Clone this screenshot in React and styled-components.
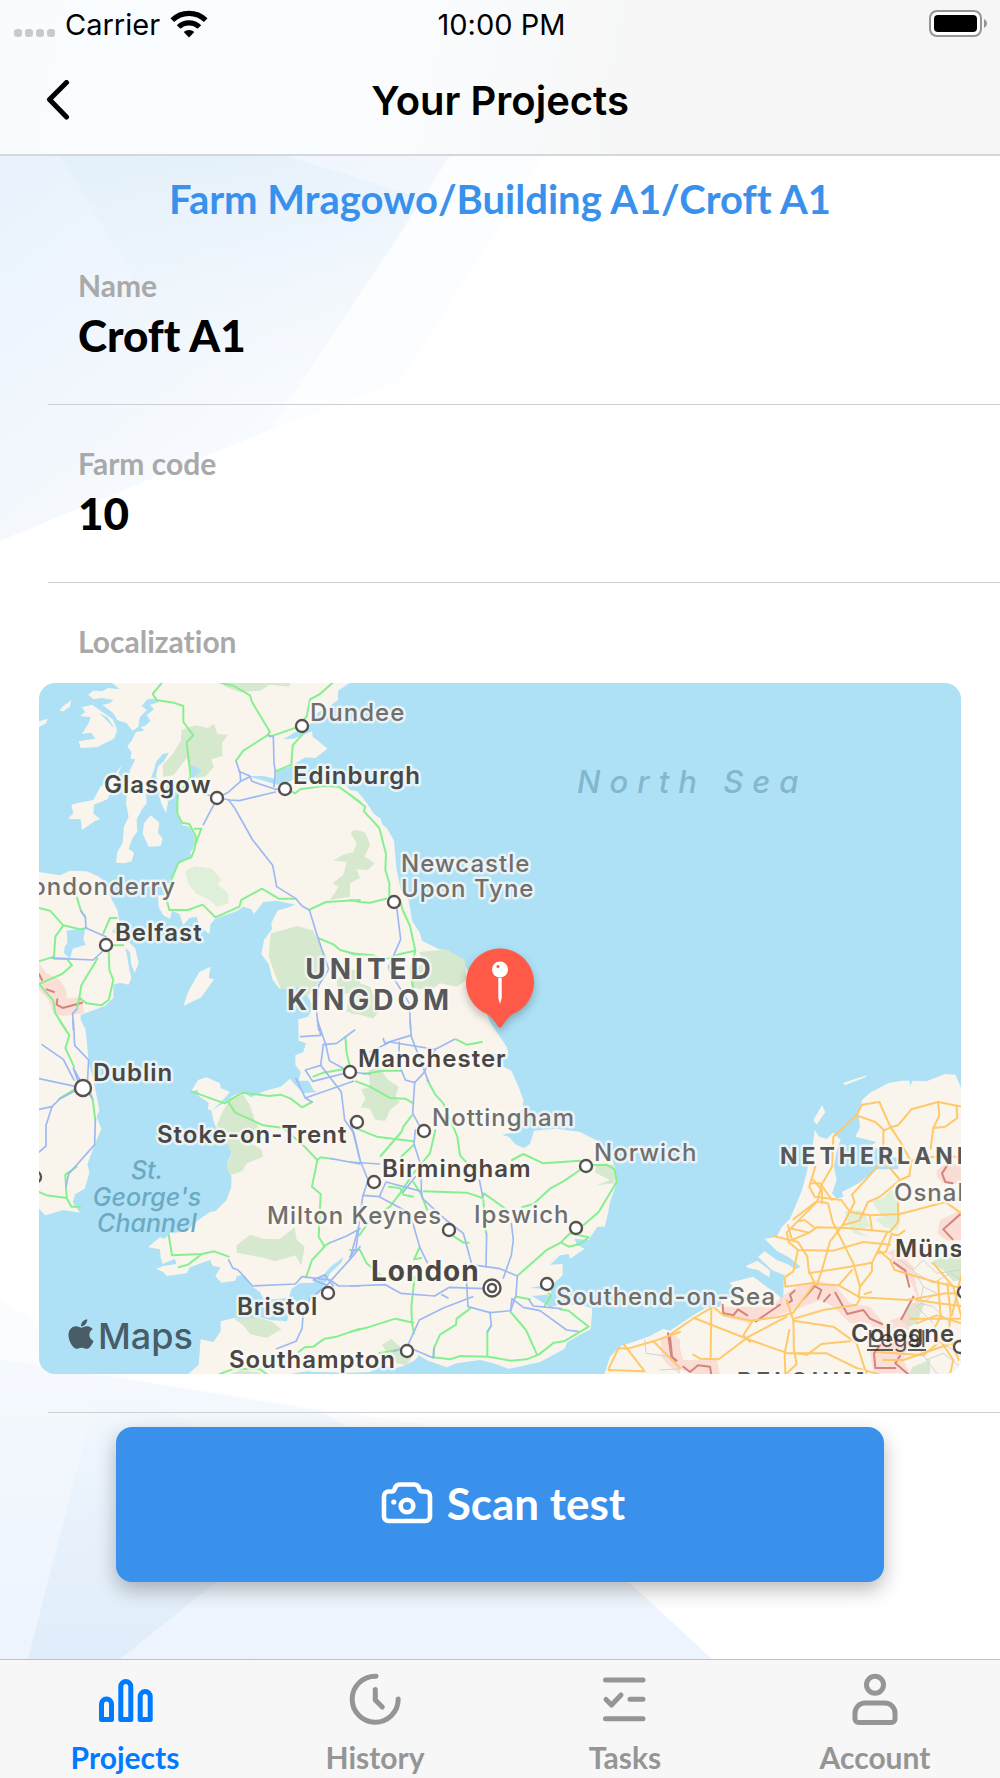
import React from 'react';
import styled, { createGlobalStyle } from 'styled-components';
import { FaApple } from 'react-icons/fa';

const colors = {
  blue: '#3a91ec',
  active: '#007aff',
  inactive: '#959595',
  label: '#a9a9a9',
  line: '#cdcfd2',
  water: '#aee1f6',
  land: '#f9f5ed',
  park: '#d6e8cd',
  wood: '#e0efd9',
  green: '#86f090',
  road: '#9db9f3',
  motorway: '#ffc96b',
  border: '#d3857d',
  pin: '#ff5a47',
};

const fonts = {
  system: "Inter, 'Liberation Sans', sans-serif",
  brand: "Lato, 'Open Sans', sans-serif",
};

const tabs = [
  { name: 'Projects', active: true },
  { name: 'History' },
  { name: 'Tasks' },
  { name: 'Account' },
];

/* ---- map data ---- */

// The terrain is surveyed in five sheets, each with its own origin.
const sheets = {
  nw: [-27, -39],
  ne: [933, -39],
  sw: [-27, 1011],
  se: [933, 1011],
  nl: [1893, 1071],
};

const plot = (...parts) =>
  parts
    .map(([sheet, points]) => {
      const [dx, dy] = sheets[sheet];
      return points
        .split(' ')
        .map((point) => {
          const [x, y] = point.split(',').map(Number);
          return `${x + dx},${y + dy}`;
        })
        .join(' ');
    })
    .join(' ');

const land = [
  // Great Britain
  plot(
    [
      'nw',
      '245,38 270,58 235,54 215,64 190,62 175,74 190,88 215,84 250,90 240,100 217,104 250,130 262,150 290,160 308,182 325,170 330,142 350,120 335,108 352,88 378,86 388,96 360,104 372,118 350,136 362,152 345,168 332,170 342,182 318,186 304,214 292,228 304,246 302,266 316,268 300,300 296,330 288,400 296,440 282,470 278,520 262,545 258,578 285,580 305,574 312,548 296,536 306,508 322,484 320,448 336,418 350,400 348,370 360,330 372,300 378,276 398,252 416,248 402,274 384,290 378,316 388,360 392,396 408,430 414,396 402,370 414,336 440,340 448,372 440,430 458,466 478,470 494,500 490,536 480,548 486,562 446,582 430,610 424,634 404,652 404,676 384,676 386,712 400,736 420,746 426,722 448,732 460,766 478,744 500,740 506,762 522,780 538,792 542,762 556,746 584,736 620,724 640,710 664,718 672,732 700,696 740,692 796,704 770,714 742,722 724,760 726,778 702,810 694,852 716,882 728,930 750,958 772,938 800,950 826,948 834,980 850,1010 834,1040 805,1048',
    ],
    [
      'sw',
      '805,14 806,62 828,70 820,96 796,106 796,134 812,156 806,182 836,182 850,210 862,216 820,220 796,196 780,176 752,200 706,212 690,220 662,232 640,216 606,228 600,236 566,258 544,272 550,300 556,318 590,356 606,396 592,430 604,470 604,500 590,540 556,574 540,576 500,604 470,634 420,640 404,656 390,652 354,682 390,688 392,712 398,732 434,716 440,732 400,738 378,746 400,756 410,768 470,760 480,742 540,720 548,738 572,742 556,768 574,788 616,782 620,768 642,764 664,798 690,816 700,838 730,838 776,834 784,808 808,790 850,788 880,766 900,742 940,712 934,728 900,760 886,790 868,820 826,846 806,880 780,880 770,904 720,900 690,892 640,900 612,894 572,904 572,934 550,966 512,958 506,1034 470,1066 770,1066 800,1058 860,1056',
    ],
    [
      'se',
      '0,1058 60,1056 100,1034 130,1046 160,1038 200,1018 240,1024 290,1042 320,1030 390,1020 430,1030 476,1046 500,1042 570,1026 600,1010 644,986 652,966 690,944 722,928 726,880 726,864 690,856 640,852 600,862 560,836 545,828 590,824 608,830 600,808 540,804 580,796 612,790 638,766 638,732 600,734 630,706 656,702 660,716 704,686 680,674 674,656 716,660 742,620 764,620 774,580 780,546 800,490 796,444 780,404 742,362 690,336 620,326 552,332 540,372 522,384 498,374 476,350 456,344 484,338 500,322 496,284 518,268 520,240 508,206 484,152 444,132 418,112 388,112 420,100 476,104 470,80 440,36 415,0',
    ],
    [
      'ne',
      '428,1080 412,1034 398,996 370,940 346,888 326,866 284,840 264,836 216,812 210,790 186,752 176,690 152,656 140,600 136,560 132,512 112,476 96,462 92,446 72,432 48,396 22,364 0,360',
    ],
    [
      'nw',
      '950,348 920,344 870,330 830,330 792,328 768,340 740,344 694,330 648,318 700,318 736,326 740,304 780,290 826,262 856,264 892,236 866,214 848,200 846,184 790,206 760,208 800,184 846,158 856,132 900,108 924,90 924,62 960,38',
    ]
  ),
  // Ireland
  plot(
    [
      'nw',
      '27,606 90,616 120,602 170,604 210,622 232,654 246,690 262,720 268,752 246,786 282,800 316,836 326,880 314,908 304,884 300,846 286,834 292,862 298,900 304,924 296,944 270,938 250,944 250,984 224,1008 182,1024 152,1034 152,1080',
    ],
    [
      'sw',
      '152,0 166,26 170,60 176,130 190,178 208,270 200,290 214,326 196,370 172,432 178,458 164,506 136,522 128,546 150,578 100,570 46,586 27,566',
    ]
  ),
  // Hebrides, Islay, Arran, Isle of Man
  plot(['nw', '155,112 186,104 226,132 248,148 262,180 252,206 200,232 152,234 146,214 196,206 184,188 156,192 176,160 182,142 150,138 166,126']),
  plot(['nw', '276,286 254,314 210,352 190,390 140,400 124,404 130,430 114,446 152,448 156,480 196,452 210,448 190,430 192,404 232,388 246,360 272,340 262,316']),
  plot(['nw', '362,436 388,458 384,488 398,506 392,528 356,530 338,492 342,460']),
  plot(['nw', '542,890 536,924 552,928 514,982 460,1008 476,962 508,906']),
  plot(['nw', '124,90 120,110 100,124 88,122 100,108']),
  plot(['nw', '54,146 48,160 27,172 27,154']),
  // Anglesey
  plot(['sw', '504,180 530,172 570,190 572,204 600,216 582,236 546,272 534,268 536,248 506,228 504,210 484,214']),
  // Continent
  plot(
    ['se', '762,1066 780,1010 812,978 850,966 900,948 940,926'],
    [
      'nl',
      '0,872 70,826 110,802 150,800 156,780 180,772 330,800 340,770 342,706 372,690 392,680 360,654 320,632 284,596 320,590 336,560 360,536 380,490 396,450 410,400 416,360 428,318 434,270 448,290 470,296 490,278 512,300 500,330 492,380 500,420 486,460 500,476 520,470 516,456 566,430 620,388 684,388 690,356 664,350 650,330 596,320 620,306 556,290 570,262 566,226 576,180 600,158 654,130 694,122 718,122 720,138 728,122 770,124 824,102 856,104 876,150 876,1010 0,1010',
    ]
  ),
  plot(['nl', '228,678 262,662 300,692 298,712 264,690 234,684']),
  plot(['nl', '264,650 284,634 320,660 352,672 384,692 340,704 306,690']),
  plot(['nl', '178,728 250,710 290,740 330,770 334,796 280,780 220,770']),
  plot(['nl', '456,196 466,216 440,254 430,240']),
  plot(['nl', '520,128 590,106 586,112 524,136']),
];

const lakes = [
  plot(['nw', '110,782 166,774 160,810 168,824 128,836 120,866 102,850 104,830 112,820']),
  plot(['nw', '482,284 514,300 486,330']),
  plot(['nw', '208,128 232,142 262,186 292,198 288,204 246,168']),
  plot(['sw', '768,1066 830,1054 870,1058 900,1066']),
  plot(['se', '206,1006 250,1032 262,1050 230,1050 190,1028']),
];

const parks = [
  plot(['nw', '455,180 496,166 534,174 552,162 562,192 594,194 576,220 578,258 544,268 552,290 528,318 500,326 480,292 470,264 430,316 400,320 398,286 430,250 452,214']),
  plot(['nw', '570,38 590,52 630,66 690,62 720,44 776,50 784,38']),
  plot(
    ['nw', '962,490 970,480 990,482'],
    ['ne', '46,488 60,524 44,560 74,580 54,600 20,598 30,624 0,640'],
    ['nw', '960,680 900,690 926,650 908,640 940,614 950,576 910,572 936,556 970,546 980,520']
  ),
  plot(['nw', '722,790 760,780 802,768 850,782 868,820 890,860 880,920 850,960 830,980 800,950 752,958 734,910 716,860']),
  plot(['nw', '920,930 950,900 990,900 990,1026 950,1026 956,970 924,972']),
  plot(['ne', '0,930 60,950 90,1020 70,1046 30,1034 0,1030']),
  plot(['ne', '208,846 290,838 344,870 350,930 320,950 270,940 240,962 184,952 180,906 220,880']),
  plot(['sw', '600,240 640,224 660,256 674,300 690,330 664,370 696,390 698,412 650,430 638,452 600,466 590,440 606,400 590,370 560,316 580,270']),
  plot(['se', '56,150 90,144 112,178 146,200 136,232 150,246 120,270 106,302 76,300 60,266 32,262 46,236 34,208 60,200']),
  plot(['sw', '620,676 660,644 700,656 748,658 794,622 800,660 824,680 814,738 796,706 736,724 704,714 620,698']),
  plot(['sw', '614,898 680,892 724,904 754,928 710,954 660,942 640,916']),
  plot(['se', '96,974 124,956 150,980 186,1010 170,1036 140,1030 112,1000']),
  plot(['sw', '590,1066 630,1050 690,1058 700,1066']),
  plot(['se', '738,436 794,434 794,490 740,496 780,480 736,458']),
  plot(['nl', '728,980 780,960 780,1004 716,1004']),
  plot(['nl', '780,670 830,640 874,650 874,720 850,724 820,690']),
  plot(['nl', '690,840 726,790 764,790 740,850 716,860']),
];

const woods = [
  plot(['nw', '466,602 494,588 546,596 574,630 562,642 594,670 596,700 560,710 540,690 500,672 474,640']),
  plot(['nl', '524,514 570,510 590,530 600,560 560,570 600,592 550,580 534,550']),
  plot(['nl', '604,480 640,474 664,446 686,470 692,540 680,572 640,560 616,536 636,530']),
];

const borderZones = [
  plot(['nw', '27,880 50,910 90,930 108,960 110,986 156,980 162,1030 100,1038 70,1030 56,990 27,960']),
  plot(['nl', '152,800 240,800 300,800 350,760 380,740 440,720 500,740 540,790 600,800 640,850 720,820 740,770 720,720 660,660 680,630 730,680 740,740 750,780 716,840 720,900 700,960 720,1000 610,1000 600,930 640,900 600,850 540,850 490,800 450,780 400,800 310,830 240,850 160,830']),
  plot(['nl', '0,880 20,890 40,960 90,960 140,960 150,1004 80,1004 20,984 0,960']),
  plot(['se', '932,954 960,940 990,960 990,1062 960,1040 934,1010']),
  plot(['nl', '800,390 830,370 874,376 874,432 820,430 800,410']),
  plot(['nl', '810,540 874,510 874,600 830,602 802,580']),
  plot(['nl', '650,640 690,620 770,630 760,650 700,660']),
];

const borderLines = [
  plot(['nw', '27,912 36,930']),
  plot(['nw', '50,958 72,966']),
  plot(['nw', '82,988 80,1004 98,1014 156,998']),
  plot(['nl', '158,794 160,820 190,826 204,808 232,826']),
  plot(['nl', '258,844 330,794']),
  plot(['nl', '374,752 360,764 366,782 352,790']),
  plot(['nl', '402,776 434,738 454,750 444,776']),
  plot(['nl', '462,784 480,764']),
  plot(['nl', '496,758 532,822 580,810 600,836 636,852']),
  plot(['nl', '672,668 706,692 718,740']),
  plot(['nl', '730,770 694,838']),
  plot(['nl', '616,984 612,940 630,916']),
  plot(['nl', '620,984 676,984']),
  plot(['nl', '690,948 676,970 714,1002']),
  plot(['nl', '0,890 6,950 20,962']),
  plot(['nl', '40,980 60,996 84,976 120,980 124,1004']),
  plot(['nl', '832,376 816,400 826,426 848,430']),
  plot(['nl', '874,520 820,568 848,598']),
  plot(['se', '954,940 964,1010 978,1022']),
];

const greenRoads = [
  plot(['nw', '396,38 368,72 380,90 430,98 460,108 460,156 490,196 470,216 476,270 482,320 442,378 442,430 456,458 478,462 498,500 494,536 484,562 446,576 426,624 410,690 418,720 474,720 518,704 556,742 628,710 634,690 696,656 746,686 796,686']),
  plot(['nw', '572,38 612,48 660,76 666,96 720,186 712,196 640,242 618,272']),
  plot(['nw', '908,38 870,72 840,88 830,140 800,172 720,200']),
  plot(['nw', '820,190 788,226 784,284 736,304']),
  plot(['nw', '764,356 796,370 810,358 880,348 926,350 990,396']),
  plot(['ne', '0,374 46,410 42,424 88,474 108,552 106,600 118,640 118,680 150,690 158,720 180,768 196,842 182,900 190,960']),
  plot(['nw', '494,476 514,476']),
  plot(['nw', '514,476 494,530']),
  plot(['nw', '836,720 888,696 990,690']),
  plot(['ne', '0,690 30,696 60,698 108,686']),
  plot(['nw', '864,804 912,824 930,840 990,856']),
  plot(['ne', '0,850 70,856 96,872 150,852 196,842']),
  plot(['nw', '27,714 60,722 100,766 76,800 72,860 27,874']),
  plot(['nw', '140,680 152,720 164,740']),
  plot(['nw', '100,766 150,778 170,774']),
  plot(['nw', '220,790 240,744 260,744']),
  plot(['nw', '246,826 280,826']),
  plot(['nw', '236,840 238,900 250,930 236,990 214,1006 170,1000 148,984 154,946 202,866']),
  plot(['nw', '148,984 140,1018']),
  plot(['nw', '72,866 110,866 126,886 96,912 27,942 70,992 76,1030 108,1080']),
  plot(['sw', '88,0 118,46 106,84 132,140']),
  plot(['sw', '140,204 88,236']),
  plot(['sw', '182,220 188,240 196,300']),
  plot(['sw', '140,440 106,464 110,534 124,560 150,560']),
  plot(['sw', '27,516 50,526 110,534']),
  plot(['sw', '484,214 584,250 612,232 640,218 716,228 752,224 782,236 816,262 846,246']),
  plot(['sw', '596,248 616,278 700,316 760,324 820,376 862,420 846,500 872,522 866,650 884,680 846,720 828,772']),
  plot(['sw', '862,420 872,412 904,416']),
  plot(['sw', '416,644 426,706 516,702 552,694 596,710']),
  plot(['sw', '446,742 474,734 516,702']),
  plot(['sw', '850,170 880,158 940,148']),
  plot(['sw', '880,680 900,668']),
  plot(['sw', '806,996 824,982 850,980 884,956 920,950 990,926']),
  plot(['sw', '570,1062 612,1046 690,1048 710,1062']),
  plot(['sw', '946,50 950,100 960,140']),
  plot(['se', '18,184 60,200 120,234 166,236 186,248']),
  plot(['se', '40,162 100,152 152,152']),
  plot(['se', '20,326 80,350 190,364']),
  plot(['se', '186,286 160,320 154,336 92,408']),
  plot(['se', '190,376 152,412']),
  plot(['se', '318,58 350,74 396,66']),
  plot(['se', '232,180 256,224 280,250 322,350 330,406 370,450']),
  plot(['se', '256,330 240,400 190,460 150,520 120,560 60,600 28,646']),
  plot(['se', '486,420 520,402 580,430 690,422 708,436 770,434 794,448 800,486 746,576 700,616']),
  plot(['se', '708,438 640,484 600,506 550,552 516,562']),
  plot(['se', '222,514 350,518 398,534 402,520 480,576']),
  plot(['se', '400,540 408,640']),
  plot(['se', '116,500 150,504 160,524 190,530']),
  plot(['se', '190,486 212,520 232,570']),
  plot(['se', '298,640 340,668 356,668']),
  plot(['se', '504,766 590,690 632,668 660,640 716,652 690,672 656,680 634,668']),
  plot(['se', '0,690 30,690 50,730 90,764']),
  plot(['se', '208,684 192,718 214,714']),
  plot(['se', '194,770 184,860 186,910 192,940']),
  plot(['se', '0,936 60,920 136,896 190,908']),
  plot(['se', '360,866 320,896 318,914 270,944 252,984 250,1012 300,1018 330,1008 416,1010 482,1022 530,1018 566,1004 612,968 642,964 716,920 690,900 656,872 630,868']),
  plot(['se', '482,876 528,930 562,1006']),
  plot(['se', '424,916 412,936 412,1006']),
  plot(['se', '500,830 540,838']),
  plot(['se', '584,858 604,826 596,820']),
  plot(['se', '88,1000 140,990']),
];

const blueRoads = [
  plot(['nw', '714,196 730,200 732,280 736,304 732,350']),
  plot(['nw', '618,274 630,308 632,334 660,320 666,334 736,358 768,356']),
  plot(['nw', '562,384 596,366 630,336']),
  plot(['nw', '626,304 660,318']),
  plot(['nw', '562,384 600,390 628,392 736,366']),
  plot(['nw', '520,370 562,384 520,464']),
  plot(['nw', '596,390 614,414 668,510 728,586 740,650 798,686 816,708 838,720 864,804 896,898 866,946 858,1010 866,1080']),
  plot(['nw', '152,722 166,740 168,774 228,800']),
  plot(['nw', '66,864 100,866 190,870 222,840']),
  plot(['nw', '140,1018 128,1030 130,1080']),
  plot(['sw', '130,0 134,76 176,120 172,190']),
  plot(['sw', '36,74 100,118 132,180']),
  plot(['sw', '27,176 150,202 130,144 160,200 188,236']),
  plot(['sw', '146,206 88,238 66,260 27,268']),
  plot(['sw', '66,260 48,316 48,378 27,396']),
  plot(['sw', '196,298 194,374 116,462 108,500']),
  plot(['sw', '812,50 872,46 862,0 888,76 898,122 960,156']),
  plot(['sw', '880,74 920,70 974,30']),
  plot(['sw', '880,74 872,136 826,150 848,184 904,170 960,156']),
  plot(['sw', '872,136 934,216 944,300 972,340 990,420']),
  plot(['sw', '970,184 826,234 798,176']),
  plot(['sw', '826,234 846,246']),
  plot(['sw', '904,416 990,432']),
  plot(['sw', '596,720 608,744 624,750 668,798 796,792 816,770 900,780 926,798 990,798']),
  plot(['sw', '900,668 950,648 990,626']),
  plot(['sw', '990,680 976,700 890,796 850,780 884,764 910,798']),
  plot(['sw', '890,796 840,836 820,880 816,926 798,964 740,986']),
  plot(['ne', '140,710 152,808 116,890 120,906 178,1000 182,1080']),
  plot(['se', '180,0 184,50 226,160 236,186']),
  plot(['se', '100,56 104,70 182,46']),
  plot(['se', '60,96 120,66 256,88 314,58']),
  plot(['se', '256,88 222,158 194,188 166,180 146,130 148,66']),
  plot(['se', '0,156 60,162']),
  plot(['se', '194,188 188,280 210,320']),
  plot(['se', '196,330 192,372 214,440 214,520']),
  plot(['se', '0,300 30,420 54,480 38,530 26,620 0,716']),
  plot(['se', '0,426 88,432']),
  plot(['se', '38,526 88,530 108,486 214,514 218,536 288,600 340,640 366,736']),
  plot(['se', '88,530 180,580 210,684 232,728']),
  plot(['se', '160,516 196,470']),
  plot(['se', '26,628 18,686 0,710']),
  plot(['se', '388,480 398,528']),
  plot(['se', '410,640 408,740']),
  plot(['se', '484,610 490,660 484,706 460,774']),
  plot(['se', '346,730 350,790 354,860 420,878 482,872 498,826 502,768 450,746 380,736']),
  plot(['se', '0,798 106,794 152,820 254,828 298,802 400,806']),
  plot(['se', '276,824 294,834']),
  plot(['se', '368,830 280,864 208,900 176,970 166,996']),
  plot(['se', '420,878 424,916 412,936']),
  plot(['se', '482,872 486,836 520,862 570,872 650,930 684,934']),
  plot(['se', '536,838 550,858 634,866']),
  plot(['se', '172,980 250,1014 252,984']),
  plot(['se', '132,994 170,980']),
];

const motorways = [
  plot(['nl', '560,226 576,194 628,186 662,262 690,304 724,366 718,408 690,420 640,360 640,272 662,262 684,256 724,208 804,186 874,200']),
  plot(['nl', '560,226 490,290 486,380 456,432 442,484 350,578 356,606 384,630 490,632 580,606 660,614']),
  plot(['nl', '670,584 684,586 704,572']),
  plot(['nl', '560,226 616,246 644,272']),
  plot(['nl', '804,186 808,226 790,264 782,326']),
  plot(['nl', '860,200 862,234 826,260 790,264']),
  plot(['nl', '724,362 790,350 874,350']),
  plot(['nl', '640,362 546,464 554,486 518,556']),
  plot(['nl', '436,380 418,440 434,470 514,480 540,516 600,526 690,522 874,474']),
  plot(['nl', '420,430 450,430 486,480']),
  plot(['nl', '430,420 456,450 456,490']),
  plot(['nl', '370,538 440,484 474,490 488,546 550,670 570,740 566,772']),
  plot(['nl', '690,420 630,470 594,486 568,542 518,556 480,604 456,690 440,736']),
  plot(['nl', '354,556 366,600 418,578 440,562 530,564 660,576 684,546 684,470']),
  plot(['nl', '366,566 418,578']),
  plot(['nl', '386,544 404,540 432,562']),
  plot(['nl', '600,530 606,570']),
  plot(['nl', '310,588 384,606 412,650 416,690 434,730 370,818']),
  plot(['nl', '384,630 370,694 344,712 346,740 434,728']),
  plot(['nl', '416,700 540,680 606,668']),
  plot(['nl', '652,576 606,668 606,694 570,740']),
  plot(['nl', '434,732 506,736 546,690']),
  plot(['nl', '506,736 570,772 712,780 828,760 874,760']),
  plot(['nl', '584,762 604,756']),
  plot(['nl', '626,630 660,660 674,690 796,726 874,744']),
  plot(['nl', '622,640 648,636 666,580']),
  plot(['nl', '72,834 130,800 158,824 244,842 330,830 370,818']),
  plot(['nl', '0,884 72,834 240,900 354,940 470,940 560,984 630,1004']),
  plot(['nl', '124,806 122,950']),
  plot(['nl', '70,944 90,956 146,958 236,890 350,830']),
  plot(['nl', '248,842 220,886 240,906']),
  plot(['nl', '350,780 370,842 372,930 380,972 346,1004 344,940 358,870']),
  plot(['nl', '370,842 490,860 560,910 590,1004']),
  plot(['nl', '380,940 412,944 454,912 540,904']),
  plot(['nl', '372,836 460,810 560,794 570,776']),
  plot(['nl', '720,836 874,836']),
  plot(['nl', '804,722 812,830 790,870 850,960 840,1004']),
  plot(['nl', '832,730 842,820 836,880 866,960']),
  plot(['nl', '874,704 846,826']),
  plot(['nl', '740,780 806,790 874,798']),
  plot(['nl', '790,670 850,740 874,830']),
  plot(['nl', '740,850 800,826 874,850']),
  plot(['nl', '620,936 760,946 840,880']),
  plot(['nl', '640,960 700,960 874,900']),
  plot(['nl', '826,486 874,520']),
  plot(['se', '776,1046 806,984 834,986 910,964 990,936']),
  plot(['se', '822,974 884,1054 776,1050']),
  plot(['se', '910,964 990,1044']),
];

const lanes = [
  plot(['nl', '690,660 730,690 760,660 800,700 874,690']),
  plot(['nl', '730,690 760,740 800,760 740,800 790,850']),
  plot(['nl', '740,700 790,730 840,700 874,720']),
  plot(['nl', '760,740 750,790 790,800 840,850']),
  plot(['nl', '730,900 770,960 820,940 870,980']),
  plot(['nl', '770,960 800,1000']),
  plot(['nl', '720,920 800,900 850,930 874,910']),
  plot(['se', '884,960 888,1000 960,1010']),
  plot(['se', '930,1050 990,1046']),
];

const cities = [
  { x: 263, y: 43 },
  { x: 246, y: 106 },
  { x: 178, y: 115 },
  { x: 67, y: 262 },
  { x: 355, y: 219 },
  { x: 44, y: 405, r: 8 },
  { x: 311, y: 389 },
  { x: 318, y: 439 },
  { x: 385, y: 448 },
  { x: 335, y: 499 },
  { x: 547, y: 483 },
  { x: 410, y: 547 },
  { x: 537, y: 545 },
  { x: 289, y: 610 },
  { x: 508, y: 601 },
  { x: 368, y: 668 },
  { x: 921, y: 664 },
  { x: 925, y: 609 },
  { x: -4, y: 494 },
];

const places = [
  { name: 'Dundee', x: 271, y: 38, tone: 'minor' },
  { name: 'Edinburgh', x: 254, y: 101 },
  { name: 'Glasgow', x: 65, y: 110 },
  { name: 'Londonderry', x: 137, y: 212, tone: 'minor', anchor: 'end' },
  { name: 'Belfast', x: 76, y: 258 },
  { name: 'Newcastle', x: 362, y: 189, tone: 'minor' },
  { name: 'Upon Tyne', x: 362, y: 214, tone: 'minor' },
  { name: 'UNITED', x: 331, y: 296, tone: 'country', anchor: 'middle' },
  { name: 'KINGDOM', x: 331, y: 327, tone: 'country', anchor: 'middle' },
  { name: 'North Sea', x: 538, y: 110, tone: 'sea' },
  { name: 'Dublin', x: 54, y: 398 },
  { name: 'Manchester', x: 319, y: 384 },
  { name: 'Stoke-on-Trent', x: 118, y: 460 },
  { name: 'Nottingham', x: 393, y: 443, tone: 'minor' },
  { name: 'Norwich', x: 555, y: 478, tone: 'minor' },
  { name: 'Birmingham', x: 343, y: 494 },
  { name: 'St.', x: 108, y: 496, tone: 'channel', anchor: 'middle' },
  { name: "George's", x: 108, y: 523, tone: 'channel', anchor: 'middle' },
  { name: 'Channel', x: 108, y: 549, tone: 'channel', anchor: 'middle' },
  { name: 'Milton Keynes', x: 228, y: 541, tone: 'minor' },
  { name: 'Ipswich', x: 435, y: 540, tone: 'minor' },
  { name: 'London', x: 332, y: 598, tone: 'capital' },
  { name: 'Bristol', x: 198, y: 632 },
  { name: 'Southend-on-Sea', x: 517, y: 622, tone: 'minor' },
  { name: 'Southampton', x: 190, y: 685 },
  { name: 'NETHERLANDS', x: 741, y: 481, tone: 'region' },
  { name: 'Osnabrück', x: 855, y: 518, tone: 'minor' },
  { name: 'Münster', x: 856, y: 574 },
  { name: 'Cologne', x: 812, y: 659 },
  { name: 'BELGIUM', x: 698, y: 706, tone: 'region' },
];

const tones = {
  city: { size: 24, weight: 600, fill: '#4a4643', track: 1 },
  minor: { size: 24, weight: 500, fill: '#716e6b', track: 1 },
  capital: { size: 28, weight: 700, fill: '#4a4643', track: 1 },
  country: { size: 28, weight: 700, fill: '#58585a', track: 4 },
  region: { size: 23, weight: 700, fill: '#58585a', track: 4 },
  sea: { size: 31, weight: 500, fill: '#83b6cf', track: 9, onWater: true },
  channel: { size: 25, weight: 500, fill: '#6caac4', track: 0, onWater: true },
};

/* ---- drawings ---- */

const Lines = ({ items, ...rest }) => (
  <g fill="none" strokeLinejoin="round" strokeLinecap="round" {...rest}>
    {items.map((points) => (
      <polyline key={points} points={points} />
    ))}
  </g>
);

const Areas = ({ items, fill }) => (
  <g fill={fill}>
    {items.map((points) => (
      <polygon key={points} points={points} />
    ))}
  </g>
);

const MapDrawing = () => (
  <MapCanvas viewBox="0 0 922 691" role="img" aria-label="Map of Croft A1">
    <rect width="922" height="691" fill={colors.water} />
    <g transform="scale(0.33333)">
      <Areas items={land} fill={colors.land} />
      <Areas items={parks} fill={colors.park} />
      <Areas items={woods} fill={colors.wood} />
      <Areas items={lakes} fill={colors.water} />
      <g opacity="0.75">
        <Areas items={borderZones} fill="#fbd5ce" />
      </g>
      <Lines items={lanes} stroke="#d4d2ce" strokeWidth="3" />
      <Lines items={borderLines} stroke={colors.border} strokeWidth="6" />
      <Lines items={motorways} stroke={colors.motorway} strokeWidth="6" />
      <Lines items={greenRoads} stroke={colors.green} strokeWidth="6" />
      <Lines items={blueRoads} stroke={colors.road} strokeWidth="5" />
    </g>
    {places.map(({ name, x, y, anchor, tone = 'city' }) => (
      <PlaceName key={name} x={x} y={y} textAnchor={anchor} $tone={tones[tone]}>
        {name}
      </PlaceName>
    ))}
    <g fill="#fff" stroke="#55514e" strokeWidth="2.400">
      {cities.map(({ x, y, r = 6 }) => (
        <circle key={`${x}-${y}`} cx={x} cy={y} r={r} />
      ))}
      <circle cx="453" cy="605" r="8.5" />
      <circle cx="453" cy="605" r="4" />
    </g>
    <Marker>
      <path
        d="M461 345c-2 0-6-10-13-14a34 34 0 1 1 26 0c-7 4-11 14-13 14z"
        fill={colors.pin}
      />
      <circle cx="461" cy="286.500" r="8" fill="#fff" />
      <circle cx="459" cy="283.500" r="1.600" fill={colors.pin} />
      <path d="M459.300 295h3.400v20l-1.700 6-1.700-6z" fill="#fff" />
    </Marker>
  </MapCanvas>
);

const WifiIcon = () => (
  <svg width="38" height="28" viewBox="0 0 38 28" aria-hidden="true">
    <g fill="none" stroke="#000" strokeWidth="5.200">
      <path d="M2.300 10.200a24 24 0 0 1 33.400 0" />
      <path d="M8.600 17a15 15 0 0 1 20.800 0" />
    </g>
    <path d="M19 27.500l-5.300-5.400a7.600 7.600 0 0 1 10.600 0z" />
  </svg>
);

const BatteryIcon = () => (
  <svg width="60" height="28" viewBox="0 0 60 28" aria-hidden="true">
    <rect x="1" y="1" width="51" height="25" rx="7" fill="#fff" stroke="#959595" strokeWidth="2" />
    <rect x="5" y="5" width="43" height="17" rx="4" />
    <path d="M55 9c4 2 4 7 0 9z" fill="#959595" />
  </svg>
);

const ChevronIcon = () => (
  <svg width="24" height="40" viewBox="0 0 24 40" aria-hidden="true">
    <path
      d="M20.500 2.500L3.500 19.500l17 17.500"
      fill="none"
      stroke="#000"
      strokeWidth="5"
      strokeLinecap="round"
      strokeLinejoin="round"
    />
  </svg>
);

const CameraIcon = () => (
  <svg width="52" height="42" viewBox="0 0 52 42" aria-hidden="true">
    <g fill="none" stroke="#fff" strokeWidth="4.600" strokeLinejoin="round">
      <path d="M7.500 9.500H11c1.600 0 2.200-.8 2.600-2.300.8-3.200 2.200-4.700 5-4.700h14.800c2.800 0 4.200 1.500 5 4.700.4 1.500 1 2.300 2.600 2.300h3.500a4.500 4.500 0 0 1 4.500 4.500v20.500a4.500 4.500 0 0 1-4.500 4.500h-37A4.500 4.500 0 0 1 3 34.500V14a4.500 4.500 0 0 1 4.500-4.500z" />
      <circle cx="26" cy="24" r="6.300" />
    </g>
    <circle cx="12.800" cy="20" r="2.600" fill="#fff" />
  </svg>
);

const tabShapes = {
  Projects: (
    <>
      <path d="M3.500 47.500V32a5 5 0 0 1 10 0v15.500z" />
      <path d="M22.800 47.500V14.500a5 5 0 0 1 10 0v33z" />
      <path d="M42.200 47.500V24.500a5 5 0 0 1 10 0v23z" />
    </>
  ),
  History: (
    <>
      <path d="M28 4.200A23 23 0 1 0 50.200 27" />
      <path d="M27.300 17.500V28l7 7" />
    </>
  ),
  Tasks: (
    <>
      <path d="M7.500 8h37.500M32 27.300h13M7.500 46.700h37.500" />
      <path d="M8 27.500l5.500 5.500 9.500-10" />
    </>
  ),
  Account: (
    <>
      <circle cx="27" cy="12.700" r="8.500" />
      <path d="M17 31h20a10 10 0 0 1 10 10v6a3.500 3.500 0 0 1-3.500 3.500h-33A3.500 3.500 0 0 1 7 47v-6a10 10 0 0 1 10-10z" />
    </>
  ),
};

const TabIcon = ({ name }) => (
  <svg
    width="56"
    height="54"
    viewBox="-1 0 56 54"
    fill="none"
    stroke="currentColor"
    strokeWidth="5"
    strokeLinecap="round"
    strokeLinejoin="round"
    aria-hidden="true"
  >
    {tabShapes[name]}
  </svg>
);

const TopFacets = () => (
  <Facets $side="top" width="560" height="390" viewBox="0 0 560 390" aria-hidden="true">
    <defs>
      <linearGradient id="topWash" x1="0" y1="0" x2="0.8" y2="0.9">
        <stop offset="0" stopColor="#e8f2fc" />
        <stop offset="0.5" stopColor="#f2f7fd" />
        <stop offset="1" stopColor="#fcfdff" />
      </linearGradient>
      <linearGradient id="topShade" x1="0" y1="0" x2="0.2" y2="1">
        <stop offset="0" stopColor="#e3f0fa" />
        <stop offset="1" stopColor="#f3f8fd" stopOpacity="0" />
      </linearGradient>
    </defs>
    <path d="M0 0h544l-54 85-90 140-115 43L0 385z" fill="#fbfdff" />
    <path d="M0 0h450l-55 85-110 166-14 22L0 385z" fill="url(#topWash)" />
    <path d="M60 0h226l137 42-28 43-110 166-125-86z" fill="url(#topShade)" />
  </Facets>
);

const BottomFacets = () => (
  <Facets $side="bottom" width="720" height="360" viewBox="0 0 720 360" aria-hidden="true">
    <defs>
      <linearGradient id="baseWash" x1="0" y1="0" x2="0" y2="1">
        <stop offset="0" stopColor="#f5f9fe" />
        <stop offset="1" stopColor="#edf4fd" />
      </linearGradient>
      <linearGradient id="baseShade" x1="0" y1="0" x2="0" y2="1">
        <stop offset="0" stopColor="#e1eefa" stopOpacity="0" />
        <stop offset="1" stopColor="#e0edfa" />
      </linearGradient>
    </defs>
    <path d="M0 0l130 80 190 30 120 18 180 147 92 85H0z" fill="#fbfcfe" />
    <path d="M0 60l130 21 190 31 120 70 180 93 92 85H0z" fill="url(#baseWash)" />
    <path d="M100 80L28 360h92l105-84 95-90z" fill="url(#baseShade)" />
  </Facets>
);

/* ---- screen ---- */

const App = () => (
  <Screen>
    <GlobalStyle />
    <Header>
      <StatusBar>
        <Carrier>
          <SignalDots>
            <Dot />
            <Dot />
            <Dot />
            <Dot />
          </SignalDots>
          <span>Carrier</span>
          <WifiIcon />
        </Carrier>
        <time>10:00 PM</time>
        <Power>
          <BatteryIcon />
        </Power>
      </StatusBar>
      <NavBar>
        <BackButton type="button" aria-label="Back">
          <ChevronIcon />
        </BackButton>
        <ScreenTitle>Your Projects</ScreenTitle>
      </NavBar>
    </Header>

    <Content>
      <TopFacets />
      <BottomFacets />
      <Breadcrumb>Farm Mragowo/Building A1/Croft A1</Breadcrumb>
      <Field>
        <FieldLabel>Name</FieldLabel>
        <FieldValue>Croft A1</FieldValue>
      </Field>
      <Field>
        <FieldLabel>Farm code</FieldLabel>
        <FieldValue>10</FieldValue>
      </Field>
      <MapField>
        <FieldLabel>Localization</FieldLabel>
        <MapCard>
          <MapDrawing />
          <MapBrand>
            <FaApple size={34} />
            <span>Maps</span>
          </MapBrand>
          <LegalLink href="#legal">Legal</LegalLink>
        </MapCard>
      </MapField>
      <ScanButton type="button">
        <CameraIcon />
        Scan test
      </ScanButton>
    </Content>

    <TabBar>
      {tabs.map(({ name, active }) => (
        <Tab key={name} href={`#${name.toLowerCase()}`} $active={active}>
          <TabIcon name={name} />
          {name}
        </Tab>
      ))}
    </TabBar>
  </Screen>
);

const GlobalStyle = createGlobalStyle`
  * {
    box-sizing: border-box;
  }
  body {
    margin: 0;
    background: #fff;
  }
`;
const Screen = styled.div`
  min-height: 100vh;
  display: flex;
  flex-direction: column;
  font-family: ${fonts.system};
  font-variant-ligatures: none;
  color: #000;
`;
const Header = styled.header`
  border-bottom: 2px solid #d5d8da;
  background: linear-gradient(100deg, #f9fcff 0%, #fafcfe 40%, #f6f6f6 65%);
`;
const StatusBar = styled.div`
  height: 48px;
  padding: 0 11px 0 14px;
  display: grid;
  grid-template-columns: 1fr auto 1fr;
  align-items: center;
  font-size: 29px;
`;
const Carrier = styled.div`
  display: flex;
  align-items: center;
  gap: 10px;
`;
const SignalDots = styled.div`
  display: flex;
  gap: 3px;
  padding-top: 18px;
`;
const Dot = styled.span`
  width: 8px;
  height: 8px;
  border-radius: 3px;
  background: #c8cacc;
`;
const Power = styled.div`
  display: flex;
  justify-content: flex-end;
`;
const NavBar = styled.div`
  height: 106px;
  padding: 0 46px;
  display: grid;
  grid-template-columns: 1fr auto 1fr;
  align-items: center;
`;
const BackButton = styled.button`
  justify-self: start;
  display: flex;
  padding: 0 0 2px;
  border: 0;
  background: none;
  cursor: pointer;
`;
const ScreenTitle = styled.h1`
  margin: 0;
  font-size: 40px;
  font-weight: 600;
  line-height: 56px;
`;
const Content = styled.main`
  position: relative;
  z-index: 0;
  flex: 1;
  display: flex;
  flex-direction: column;
  font-family: ${fonts.brand};
`;
const Facets = styled.svg`
  position: absolute;
  left: 0;
  ${({ $side }) => $side}: 0;
  z-index: -1;
`;
const Breadcrumb = styled.p`
  margin: 0;
  padding: 19px 24px 4px;
  font-size: 40px;
  font-weight: 700;
  line-height: 48px;
  text-align: center;
  color: ${colors.blue};
`;
const Field = styled.section`
  height: 178px;
  margin-left: 48px;
  padding: 38px 30px 0;
  border-bottom: 1px solid ${colors.line};
`;
const FieldLabel = styled.h2`
  margin: 0;
  font-size: 30px;
  font-weight: 700;
  line-height: 40px;
  color: ${colors.label};
`;
const FieldValue = styled.p`
  margin: 0;
  font-size: 44px;
  font-weight: 900;
  line-height: 60px;
`;
const MapField = styled(Field)`
  height: auto;
  padding: 38px 0 38px 30px;
`;
const MapCard = styled.div`
  position: relative;
  margin: 22px 39px 0 -39px;
  border-radius: 16px;
  overflow: hidden;
`;
const MapCanvas = styled.svg`
  display: block;
  width: 100%;
`;
const PlaceName = styled.text`
  font-family: ${fonts.system};
  font-size: ${({ $tone }) => $tone.size}px;
  font-weight: ${({ $tone }) => $tone.weight};
  font-style: ${({ $tone }) => ($tone.onWater ? 'italic' : 'normal')};
  letter-spacing: ${({ $tone }) => $tone.track}px;
  fill: ${({ $tone }) => $tone.fill};
  stroke: ${({ $tone }) => ($tone.onWater ? 'none' : 'rgba(250, 249, 246, 0.75)')};
  stroke-width: 5px;
  stroke-linejoin: round;
  paint-order: stroke;
`;
const Marker = styled.g`
  filter: drop-shadow(0 4px 4px rgba(0, 0, 0, 0.25));
`;
const MapBrand = styled.div`
  position: absolute;
  left: 25px;
  bottom: 16px;
  display: flex;
  align-items: center;
  font-family: ${fonts.system};
  font-size: 36px;
  font-weight: 500;
  line-height: 44px;
  color: #485d66;

  svg {
    width: auto;
    margin-bottom: 4px;
  }
`;
const LegalLink = styled.a`
  position: absolute;
  right: 35px;
  bottom: 21px;
  font-family: ${fonts.system};
  font-size: 23px;
  line-height: 28px;
  color: rgba(40, 40, 40, 0.75);
`;
const ScanButton = styled.button`
  margin: 14px 116px 76px;
  height: 155px;
  padding: 0 0 4px 6px;
  display: flex;
  align-items: center;
  justify-content: center;
  gap: 14px;
  border: 0;
  border-radius: 16px;
  background: ${colors.blue};
  box-shadow: 0 8px 20px rgba(0, 0, 0, 0.27);
  font-family: ${fonts.brand};
  font-size: 44px;
  font-weight: 700;
  color: #fff;
  cursor: pointer;
`;
const TabBar = styled.nav`
  height: 119px;
  display: grid;
  grid-template-columns: repeat(4, 1fr);
  border-top: 1px solid #bfc1c5;
  background: #f7f7f7;
`;
const Tab = styled.a`
  padding-top: 12px;
  display: flex;
  flex-direction: column;
  align-items: center;
  gap: 13px;
  font-family: ${fonts.brand};
  font-size: 30px;
  font-weight: 700;
  line-height: 36px;
  text-decoration: none;
  color: ${({ $active }) => ($active ? colors.active : colors.inactive)};
`;

export default App;
